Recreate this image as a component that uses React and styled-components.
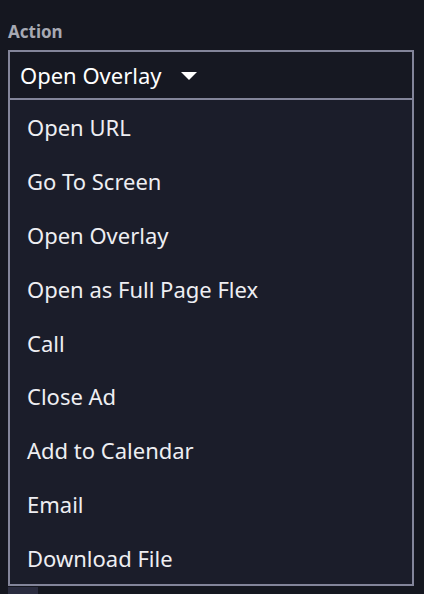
import React from "react";
import styled, { createGlobalStyle } from "styled-components";

const GlobalStyle = createGlobalStyle`
  html, body { margin: 0; padding: 0; background: #151720; }
  body { font-family: "Noto Sans", "Open Sans", sans-serif; overflow: hidden; height: 594px; }
  * { box-sizing: border-box; }
`;

const Panel = styled.div`
  width: 424px;
  padding: 21px 10px 0 8px;
  display: flex;
  flex-direction: column;
  & > * { flex-shrink: 0; }
`;

const Label = styled.div`
  font-size: 17px;
  font-weight: 700;
  color: #a7a9b3;
  line-height: 22px;
  height: 29px;
`;

const SelectWrap = styled.div`
  position: relative;
`;

const SelectBox = styled.div`
  height: 50px;
  border: 2px solid #83859a;
  background: #161822;
  display: flex;
  align-items: center;
  padding: 0 0 0 10px;
  color: #ffffff;
  font-size: 22px;
  gap: 19px;
`;

const Caret = styled.svg`
  width: 16px;
  height: 8px;
  display: block;
  margin-top: 1px;
`;

const Menu = styled.ul`
  position: absolute;
  top: 48px;
  left: 0;
  right: 0;
  margin: 0;
  padding: 0;
  list-style: none;
  background: #1b1d2a;
  border: 2px solid #83859a;
  z-index: 2;
`;

const Item = styled.li`
  height: 53.8px;
  display: flex;
  align-items: center;
  padding: 1px 0 0 17px;
  font-size: 22px;
  color: #eeeef2;
`;

const Below = styled.div`
  margin-top: 487px;
  display: flex;
  gap: 12px;
`;

const Swatch = styled.div`
  width: 30px;
  height: 20px;
  background: #2a2c3f;
`;

const items = [
  "Open URL",
  "Go To Screen",
  "Open Overlay",
  "Open as Full Page Flex",
  "Call",
  "Close Ad",
  "Add to Calendar",
  "Email",
  "Download File",
];

export default function App() {
  return (
    <>
      <GlobalStyle />
      <Panel>
        <Label>Action</Label>
        <SelectWrap>
          <SelectBox>
            <span>Open Overlay</span>
            <Caret viewBox="0 0 16 8">
              <path d="M0 0 L16 0 L8 8 Z" fill="#ffffff" />
            </Caret>
          </SelectBox>
          <Menu>
            {items.map((t) => (
              <Item key={t}>{t}</Item>
            ))}
          </Menu>
        </SelectWrap>
        <Below>
          <Swatch />
        </Below>
      </Panel>
    </>
  );
}
